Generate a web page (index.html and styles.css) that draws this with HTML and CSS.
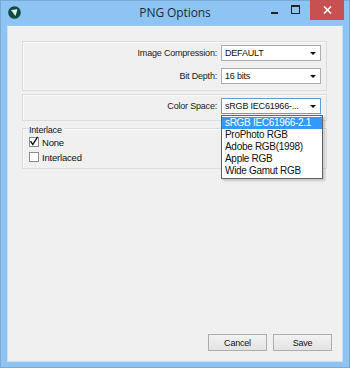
FILE: index.html
```html
<!DOCTYPE html>
<html>
<head>
<meta charset="utf-8">
<link rel="stylesheet" href="styles.css">
</head>
<body>
<div class="window">
  <div class="titlebar">
    <svg class="app-icon" width="13" height="13" viewBox="0 0 13 13">
      <circle cx="6.5" cy="6.5" r="6.3" fill="#0f4a43"/>
      <path d="M3 4 L9.5 3.2 L7.5 10 Z" fill="#e8f3ef"/>
      <path d="M3 4 L7.5 10 L5 5.5 Z" fill="#9cc7bb"/>
    </svg>
    <div class="title">PNG Options</div>
    <div class="controls">
      <div class="ctl min"><span class="min-bar"></span></div>
      <div class="ctl max"><span class="max-box"></span></div>
      <div class="ctl close">
        <svg width="9" height="8" viewBox="0 0 9 8"><path d="M1 0.5 L8 7.5 M8 0.5 L1 7.5" stroke="#fff" stroke-width="1.6"/></svg>
      </div>
    </div>
  </div>
  <div class="client">
    <div class="panel panel-top">
      <div class="row">
        <span class="label">Image Compression:</span>
        <div class="combo"><span class="combo-text">DEFAULT</span><span class="arrow"></span></div>
      </div>
      <div class="row">
        <span class="label">Bit Depth:</span>
        <div class="combo"><span class="combo-text">16 bits</span><span class="arrow"></span></div>
      </div>
    </div>
    <div class="panel panel-color">
      <div class="row">
        <span class="label">Color Space:</span>
        <div class="combo combo-open"><span class="combo-text">sRGB IEC61966-...</span><span class="arrow"></span>
          <ul class="dropdown">
            <li class="selected">sRGB IEC61966-2.1</li>
            <li>ProPhoto RGB</li>
            <li>Adobe RGB(1998)</li>
            <li>Apple RGB</li>
            <li>Wide Gamut RGB</li>
          </ul>
        </div>
      </div>
    </div>
    <div class="group">
      <div class="group-label">Interlace</div>
      <label class="check"><span class="box checked">
        <svg width="10" height="10" viewBox="0 0 10 10"><path d="M1.5 5.2 L3.8 8.5 L8.6 0.8" stroke="#111" stroke-width="1.4" fill="none"/></svg>
      </span>None</label>
      <label class="check"><span class="box"></span>Interlaced</label>
    </div>
    <div class="spacer"></div>
    <div class="buttons">
      <div class="btn">Cancel</div>
      <div class="btn">Save</div>
    </div>
  </div>
</div>
</body>
</html>
```
FILE: styles.css
```css
html, body {
  margin: 0;
  padding: 0;
  width: 350px;
  height: 368px;
  overflow: hidden;
}
.window {
  width: 350px;
  height: 368px;
  box-sizing: border-box;
  background: #8dc4f3;
  border: 1px solid #7aa9d6;
  display: flex;
  flex-direction: column;
  font-family: "Liberation Sans", Arial, sans-serif;
  font-size: 9px;
  letter-spacing: -0.2px;
  color: #111;
}
.titlebar {
  height: 24px;
  display: flex;
  align-items: flex-start;
  position: relative;
}
.app-icon {
  margin: 5px 0 0 7px;
}
.title {
  position: absolute;
  left: 0;
  right: 0;
  top: 3px;
  text-align: center;
  font-family: "Open Sans", "Noto Sans", sans-serif;
  font-size: 12px;
  letter-spacing: -0.1px;
  color: #1e2a36;
}
.controls {
  margin-left: auto;
  display: flex;
  position: relative;
}
.ctl {
  width: 21px;
  height: 20px;
  display: flex;
  align-items: center;
  justify-content: center;
}
.min-bar {
  width: 7px;
  height: 2px;
  background: #222;
  margin-top: 4px;
}
.max-box {
  width: 7px;
  height: 6px;
  border: 1px solid #222;
  border-top-width: 2px;
  margin-top: -3px;
}
.close {
  width: 34px;
  margin-left: 4px;
  margin-right: 5px;
  background: #c75050;
  margin-top: -1px;
  height: 20px;
}
.client {
  flex: 1;
  margin: 0 6px 5px 6px;
  background: #f0f0f0;
  border: 1px solid #c9dff2;
  border-top-color: #9ec5e9;
  display: flex;
  flex-direction: column;
  padding: 15px 15px 10px 14px;
}
.panel {
  border: 1px solid #dcdcdc;
  box-shadow: inset 1px 1px 0 #fafafa;
  display: flex;
  flex-direction: column;
  gap: 7px;
  padding: 3px 5px 6px 5px;
}
.panel-color {
  margin-top: 3px;
  padding: 3px 5px 6px 5px;
}
.row {
  display: flex;
  align-items: center;
  justify-content: flex-end;
}
.label {
  margin-right: 4px;
  color: #1a1a1a;
}
.combo {
  width: 95px;
  height: 14px;
  border: 1px solid #adadad;
  background: #fff;
  display: flex;
  align-items: center;
  position: relative;
  padding-left: 3px;
  box-sizing: content-box;
}
.combo-open {
  border-color: #5aa0e0;
}
.combo-text {
  flex: 1;
  white-space: nowrap;
}
.arrow {
  width: 0;
  height: 0;
  border-left: 3px solid transparent;
  border-right: 3px solid transparent;
  border-top: 3px solid #111;
  margin-right: 4px;
}
.dropdown {
  position: absolute;
  left: -1px;
  top: 16px;
  width: 100px;
  margin: 0;
  padding: 1px 0;
  list-style: none;
  background: #fff;
  border: 1px solid #646464;
  box-shadow: 2px 2px 2px rgba(0,0,0,0.18);
  z-index: 5;
  font-size: 10px;
  letter-spacing: -0.3px;
}
.dropdown li {
  height: 12px;
  line-height: 12px;
  padding-left: 3px;
  white-space: nowrap;
}
.dropdown li.selected {
  background: #3399ff;
  color: #fff;
}
.group {
  margin-top: 7px;
  border: 1px solid #dcdcdc;
  box-shadow: inset 1px 1px 0 #fafafa;
  padding: 0 6px 5px 6px;
  display: flex;
  flex-direction: column;
  gap: 3px;
  position: relative;
}
.group-label {
  margin-top: -4px;
  margin-bottom: -2px;
  background: #f0f0f0;
  align-self: flex-start;
  padding-right: 2px;
  line-height: 10px;
}
.check {
  display: flex;
  align-items: center;
  gap: 3px;
  font-size: 9.5px;
  height: 12px;
}
.box {
  width: 8px;
  height: 8px;
  border: 1px solid #8a8a8a;
  background: #fff;
  position: relative;
}
.box svg {
  position: absolute;
  left: -1px;
  top: -2px;
}
.spacer {
  flex: 1;
}
.buttons {
  display: flex;
  justify-content: flex-end;
  gap: 6px;
  margin-right: -5px;
}
.btn {
  width: 57px;
  height: 15px;
  border: 1px solid #adadad;
  background: linear-gradient(#f2f2f2, #e3e3e3);
  display: flex;
  align-items: center;
  justify-content: center;
}
```
